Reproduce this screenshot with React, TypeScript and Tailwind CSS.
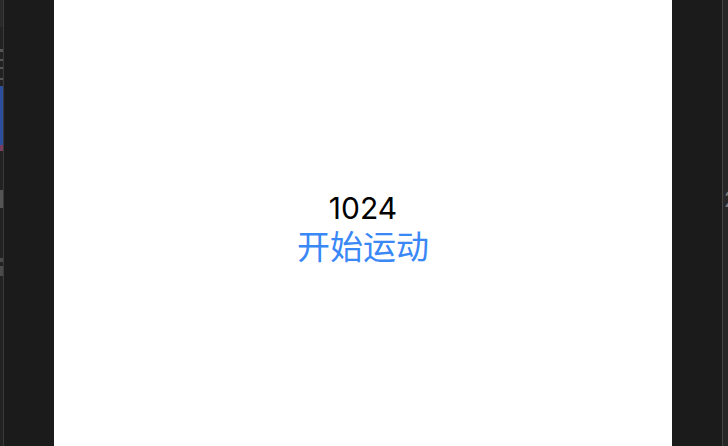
const leftMarks = [
  { h: "h-[27px]", bg: "bg-[#2a2a2a]" },
  { h: "h-[22px]", bg: "bg-transparent" },
  { h: "h-[3px]", bg: "bg-[#555]" },
  { h: "h-[7px]", bg: "bg-transparent" },
  { h: "h-[2px]", bg: "bg-[#555]" },
  { h: "h-[6px]", bg: "bg-transparent" },
  { h: "h-[2px]", bg: "bg-[#555]" },
  { h: "h-[9px]", bg: "bg-transparent" },
  { h: "h-[2px]", bg: "bg-[#555]" },
  { h: "h-[6px]", bg: "bg-transparent" },
  { h: "h-[59px]", bg: "bg-[#2b4f9c]" },
  { h: "h-[6px]", bg: "bg-[#7a3b5c]" },
  { h: "h-[39px]", bg: "bg-transparent" },
  { h: "h-[18px]", bg: "bg-[#555]" },
  { h: "h-[50px]", bg: "bg-transparent" },
  { h: "h-[4px]", bg: "bg-[#4a4a4a]" },
  { h: "h-[4px]", bg: "bg-transparent" },
  { h: "h-[10px]", bg: "bg-[#4a4a4a]" },
];

export default function App() {
  return (
    <div className="flex h-[446px] w-[728px] overflow-hidden bg-[#1b1b1b] font-['Inter','Noto_Sans_CJK_SC',sans-serif]">
      {/* left editor edge */}
      <div className="flex h-full w-[54px] shrink-0">
        <div className="flex h-full w-[3px] flex-col bg-[#222]">
          {leftMarks.map((m, i) => (
            <div key={i} className={`${m.h} ${m.bg} w-[3px] shrink-0`} />
          ))}
        </div>
        <div className="h-full w-px bg-[#3a3a3a]" />
      </div>

      {/* simulator screen */}
      <div className="flex h-full w-[618px] shrink-0 flex-col items-center justify-center bg-white pt-[12px]">
        <div className="text-[30px] leading-[34px] text-black">1024</div>
        <div className="mt-[2px] text-[33px] leading-[40px] text-[#3a87f6]">开始运动</div>
      </div>

      {/* right panel edge */}
      <div className="h-full w-[50px] shrink-0 bg-[#1b1b1b]" />
      <div className="h-full w-px bg-[#444]" />
      <div className="flex h-full flex-1 flex-col overflow-hidden bg-[#262626] pl-px pt-[186px]">
        <span className="text-[22px] leading-[26px] text-[#777]">2</span>
      </div>
    </div>
  );
}
